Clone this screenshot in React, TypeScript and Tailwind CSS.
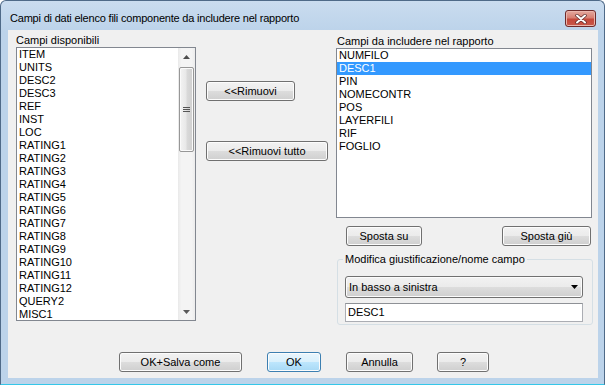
import React from "react";

const leftItems = [
  "ITEM", "UNITS", "DESC2", "DESC3", "REF", "INST", "LOC",
  "RATING1", "RATING2", "RATING3", "RATING4", "RATING5", "RATING6", "RATING7",
  "RATING8", "RATING9", "RATING10", "RATING11", "RATING12", "QUERY2", "MISC1",
];
const rightItems = ["NUMFILO", "DESC1", "PIN", "NOMECONTR", "POS", "LAYERFILI", "RIF", "FOGLIO"];

const btnBase =
  "h-[20px] flex items-center justify-center rounded-[3px] border text-[11px] leading-none text-black shadow-[inset_0_0_0_1px_#fcfcfc]";
const btnNormal =
  "border-[#707070] bg-[linear-gradient(#f2f2f2_0%,#ebebeb_50%,#dddddd_50%,#cfcfcf_100%)]";
const btnDefault =
  "border-[#3c7fb1] bg-[linear-gradient(#eaf6fd_0%,#d9f0fc_50%,#bee6fd_50%,#a7d9f5_100%)]";

function Btn({ children, className = "", def = false }: { children: React.ReactNode; className?: string; def?: boolean }) {
  return <div className={`${btnBase} ${def ? btnDefault : btnNormal} ${className}`}>{children}</div>;
}

function Scrollbar() {
  return (
    <div className="w-[17px] h-full flex flex-col bg-[linear-gradient(90deg,#e9e9e9,#f4f4f4_20%,#f4f4f4_80%,#ececec)]">
      <div className="h-[17px] flex items-center justify-center">
        <svg width="7" height="4" viewBox="0 0 7 4">
          <path d="M0 4 L3.5 0 L7 4 Z" fill="#4d4d4d" />
        </svg>
      </div>
      <div className="flex-1 pt-[2px]">
        <div className="mx-[1px] h-[85px] rounded-[2px] border border-[#979797] bg-[linear-gradient(90deg,#f3f3f3,#e8e8e8_45%,#d9d9d9_55%,#cfcfcf)] shadow-[inset_0_0_0_1px_#fafafa] flex flex-col items-center justify-center gap-[1px]">
          <div className="w-[7px] h-[1px] bg-[#555]" />
          <div className="w-[7px] h-[1px] bg-[#555]" />
          <div className="w-[7px] h-[1px] bg-[#555]" />
        </div>
      </div>
      <div className="h-[17px] flex items-center justify-center">
        <svg width="7" height="4" viewBox="0 0 7 4">
          <path d="M0 0 L7 0 L3.5 4 Z" fill="#5a5a5a" />
        </svg>
      </div>
    </div>
  );
}

export default function App() {
  return (
    <div className="w-[606px] h-[386px] bg-white font-['Liberation_Sans',Arial,sans-serif]">
      <div className="w-[605px] h-[385px] rounded-t-[6px] border border-[#4f6a88] border-b-[#35c6e8] bg-[linear-gradient(#cadcef_0px,#bcd3ea_30px,#bcd3ea_100%)] flex flex-col px-[7px] pb-[6px]">
        {/* title bar */}
        <div className="h-[29px] flex items-start pt-[9px] -mx-[7px] pl-[9px] pr-[8px]">
          <div className="flex-1 text-[11px] tracking-[-0.2px] leading-[17px] text-black font-['Liberation_Sans',sans-serif]">
            Campi di dati elenco fili componente da includere nel rapporto
          </div>
          <div className="w-[31px] h-[17px] rounded-[3px] border border-[#6e2a2a] bg-[linear-gradient(#e4a99f_0%,#d77f72_45%,#c4483b_55%,#c9584a_100%)] shadow-[inset_0_0_0_1px_#eab5ac] flex items-center justify-center">
            <svg width="12" height="10" viewBox="0 0 12 10">
              <path d="M2 1.5 L10 8.5 M10 1.5 L2 8.5" stroke="#5a2a2a" strokeWidth="3.4" strokeLinecap="round" />
              <path d="M2 1.5 L10 8.5 M10 1.5 L2 8.5" stroke="#ffffff" strokeWidth="2" strokeLinecap="round" />
            </svg>
          </div>
        </div>

        {/* client area */}
        <div className="w-[590px] h-[348px] bg-[#f0f0f0] flex flex-col pt-[4px] text-[11px] text-black">
          <div className="h-[291px] flex pl-[8px]">
            {/* left column */}
            <div className="w-[180px] flex flex-col">
              <div className="h-[13px] leading-[13px]">Campi disponibili</div>
              <div className="h-[274px] border border-[#828790] bg-white flex overflow-hidden">
                <div className="flex-1 flex flex-col pl-[2px] overflow-hidden">
                  {leftItems.map((t) => (
                    <div key={t} className="h-[13px] leading-[13px] shrink-0 whitespace-nowrap">{t}</div>
                  ))}
                </div>
                <Scrollbar />
              </div>
            </div>

            {/* middle column */}
            <div className="ml-[10px] w-[122px] flex flex-col pt-[47px]">
              <Btn className="w-[89px] h-[19px]">&lt;&lt;Rimuovi</Btn>
              <Btn className="w-[122px] mt-[40px]">&lt;&lt;Rimuovi tutto</Btn>
            </div>

            {/* right column */}
            <div className="ml-[8px] w-[257px] flex flex-col pt-[1px]">
              <div className="h-[13px] leading-[13px] pl-[1px]">Campi da includere nel rapporto</div>
              <div className="w-[256px] h-[170px] border border-[#828790] bg-white flex flex-col overflow-hidden">
                {rightItems.map((t) => (
                  <div
                    key={t}
                    className={`h-[13px] leading-[13px] pl-[2px] shrink-0 ${t === "DESC1" ? "bg-[#3399ff] text-white" : ""}`}
                  >
                    {t}
                  </div>
                ))}
              </div>
              <div className="mt-[8px] w-[256px] flex justify-between pl-[10px] pr-[1px]">
                <Btn className="w-[76px]">Sposta su</Btn>
                <Btn className="w-[89px]">Sposta giù</Btn>
              </div>
              <fieldset className="mt-[7px] ml-[1px] w-[256px] h-[72px] border border-[#d5dfe5] rounded-[3px] pb-[2px]">
                <legend className="ml-[5px] px-[2px] h-[13px] leading-[13px]">Modifica giustificazione/nome campo</legend>
                <div className="ml-[7px] mt-[10px] w-[238px] h-[22px] rounded-[3px] border border-[#707070] bg-[linear-gradient(#f2f2f2_0%,#ebebeb_50%,#dddddd_50%,#cfcfcf_100%)] shadow-[inset_0_0_0_1px_#fcfcfc] flex items-center pl-[3px] pr-[3px]">
                  <span className="flex-1">In basso a sinistra</span>
                  <svg width="7" height="4" viewBox="0 0 7 4" className="mr-[1px]">
                    <path d="M0 0 L7 0 L3.5 4 Z" fill="#000" />
                  </svg>
                </div>
                <div className="ml-[7px] mt-[5px] w-[238px] h-[19px] border border-[#abadb3] border-t-[#8e9196] bg-white flex items-center pl-[2px]">
                  DESC1
                </div>
              </fieldset>
            </div>
          </div>

          {/* bottom buttons */}
          <div className="mt-[27px] flex pl-[111px]">
            <Btn className="w-[123px]">OK+Salva come</Btn>
            <Btn def className="w-[54px] ml-[25px]">OK</Btn>
            <Btn className="w-[67px] ml-[25px]">Annulla</Btn>
            <Btn className="w-[52px] ml-[24px]">?</Btn>
          </div>
        </div>
      </div>
    </div>
  );
}
